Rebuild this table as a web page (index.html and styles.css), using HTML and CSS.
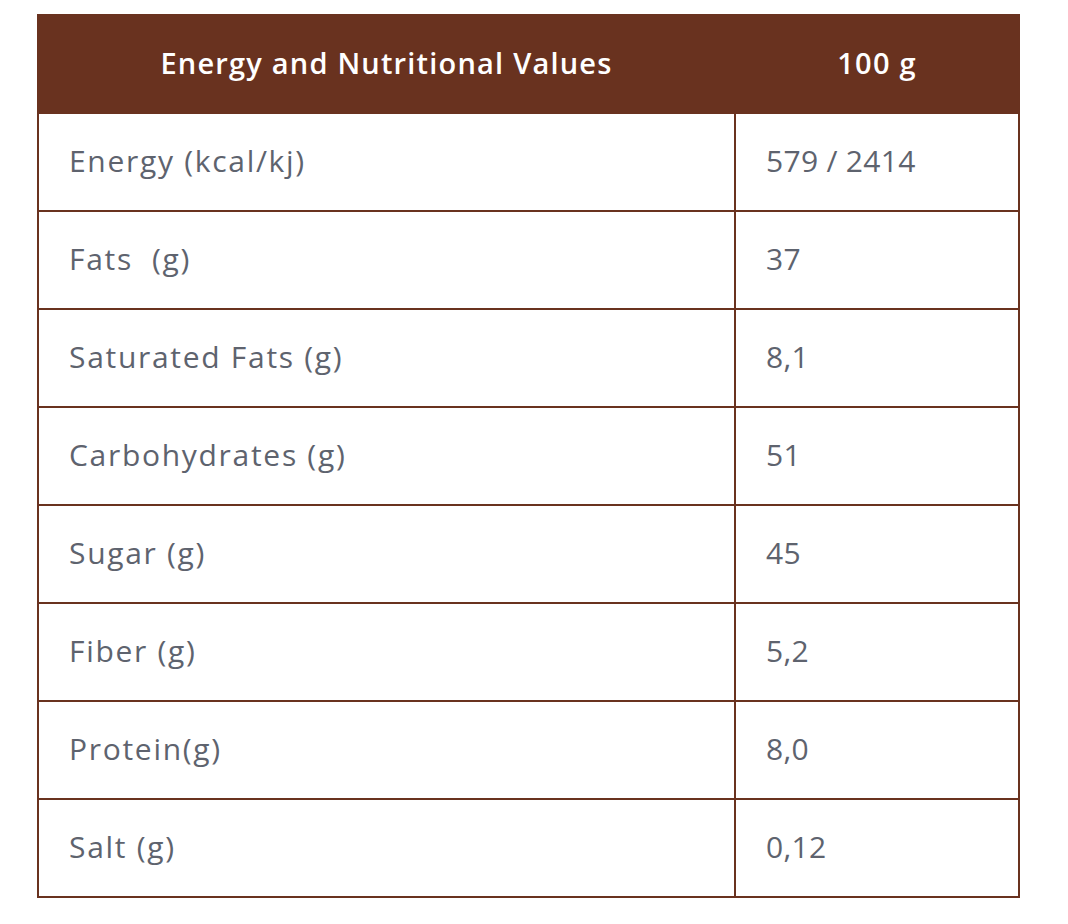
FILE: index.html
```html
<!DOCTYPE html>
<html lang="en">
<head>
<meta charset="utf-8">
<title>Nutrition</title>
<link rel="stylesheet" href="styles.css">
</head>
<body>
<table class="nutrition">
  <thead>
    <tr><th class="col-name">Energy and Nutritional Values</th><th class="col-val">100 g</th></tr>
  </thead>
  <tbody>
    <tr><td class="label">Energy (kcal/kj)</td><td class="value">579 / 2414</td></tr>
    <tr><td class="label">Fats &nbsp;(g)</td><td class="value">37</td></tr>
    <tr><td class="label">Saturated Fats (g)</td><td class="value">8,1</td></tr>
    <tr><td class="label">Carbohydrates (g)</td><td class="value">51</td></tr>
    <tr><td class="label">Sugar (g)</td><td class="value">45</td></tr>
    <tr><td class="label">Fiber (g)</td><td class="value">5,2</td></tr>
    <tr><td class="label">Protein(g)</td><td class="value">8,0</td></tr>
    <tr><td class="label">Salt (g)</td><td class="value">0,12</td></tr>
  </tbody>
</table>
</body>
</html>
```
FILE: styles.css
```css
html, body {
  margin: 0;
  padding: 0;
  background: #ffffff;
}
body {
  padding: 14px 48px 0 37px;
  font-family: "Open Sans", sans-serif;
}
.nutrition {
  width: 983px;
  border-collapse: collapse;
  table-layout: fixed;
}
.nutrition th {
  background: #69321f;
  color: #ffffff;
  font-weight: 600;
  font-size: 29px;
  letter-spacing: 1.2px;
  height: 98px;
  padding: 0 0 4px 0;
  text-align: center;
  border: 2px solid #69321f;
  box-sizing: border-box;
}
.col-name { width: 697px; }
.nutrition td {
  height: 98px;
  box-sizing: border-box;
  padding: 0 0 3px 30px;
  border: 2px solid #69321f;
  color: #5e636e;
  font-size: 30px;
  text-align: left;
}
.label { letter-spacing: 1.7px; }
.value { letter-spacing: 0.3px; }
```
